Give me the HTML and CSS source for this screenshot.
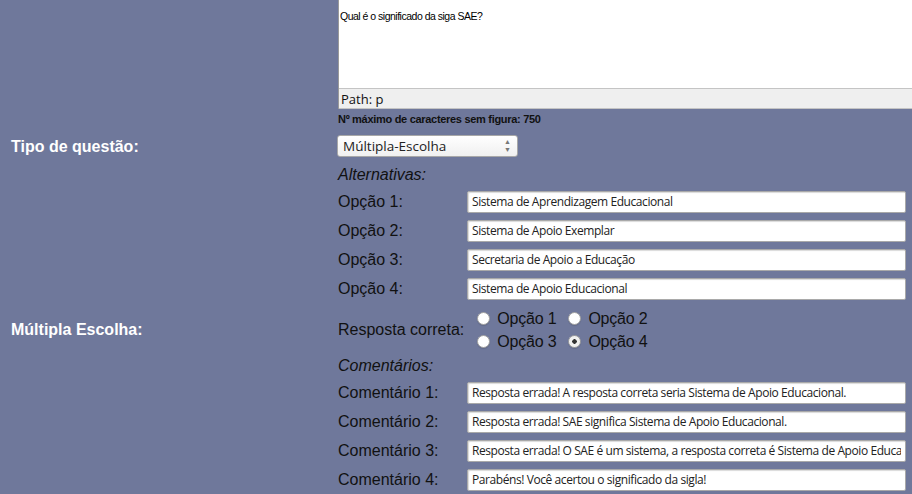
FILE: index.html
```html
<!DOCTYPE html>
<html lang="pt">
<head>
<meta charset="utf-8">
<title>Questão</title>
<link rel="stylesheet" href="styles.css">
</head>
<body>
<div class="form">
  <div class="lbl"></div>
  <div class="cell">
    <div class="editor">
      <div class="editor-body"><p>Qual é o significado da siga SAE?</p></div>
      <div class="editor-path">Path: p</div>
    </div>
  </div>

  <div class="lbl"></div>
  <div class="cell note">Nº máximo de caracteres sem figura: 750</div>

  <div class="lbl">Tipo de questão:</div>
  <div class="cell sel-cell">
    <div class="select">
      <span>Múltipla-Escolha</span>
      <span class="arrows"><span>▲</span><span>▼</span></span>
    </div>
  </div>

  <div class="lbl">Múltipla Escolha:</div>
  <div class="cell block">
    <div class="section">Alternativas:</div>
    <div class="row"><span class="rlabel">Opção 1:</span><input class="field" type="text" value="Sistema de Aprendizagem Educacional"></div>
    <div class="row"><span class="rlabel">Opção 2:</span><input class="field" type="text" value="Sistema de Apoio Exemplar"></div>
    <div class="row"><span class="rlabel">Opção 3:</span><input class="field" type="text" value="Secretaria de Apoio a Educação"></div>
    <div class="row"><span class="rlabel">Opção 4:</span><input class="field" type="text" value="Sistema de Apoio Educacional"></div>

    <div class="answer">
      <span class="alabel">Resposta correta:</span>
      <div class="radios">
        <div class="rline">
          <label class="ropt"><input type="radio" name="r"><span>Opção 1</span></label>
          <label class="ropt"><input type="radio" name="r"><span>Opção 2</span></label>
        </div>
        <div class="rline">
          <label class="ropt"><input type="radio" name="r"><span>Opção 3</span></label>
          <label class="ropt"><input type="radio" name="r" checked><span>Opção 4</span></label>
        </div>
      </div>
    </div>

    <div class="section">Comentários:</div>
    <div class="row"><span class="rlabel">Comentário 1:</span><input class="field" type="text" value="Resposta errada! A resposta correta seria Sistema de Apoio Educacional."></div>
    <div class="row"><span class="rlabel">Comentário 2:</span><input class="field" type="text" value="Resposta errada! SAE significa Sistema de Apoio Educacional."></div>
    <div class="row"><span class="rlabel">Comentário 3:</span><input class="field" type="text" value="Resposta errada! O SAE é um sistema, a resposta correta é Sistema de Apoio Educacional."></div>
    <div class="row"><span class="rlabel">Comentário 4:</span><input class="field" type="text" value="Parabéns! Você acertou o significado da sigla!"></div>
  </div>
</div>
</body>
</html>
```

FILE: styles.css
```css
html, body {
  margin: 0;
  padding: 0;
  overflow: hidden;
}
body {
  background: #6f789b;
  font-family: "Liberation Sans", Arial, sans-serif;
  color: #111;
  width: 912px;
  height: 494px;
}
.form {
  display: grid;
  grid-template-columns: 338px 574px;
  align-items: center;
}
.lbl {
  padding-left: 11px;
  color: #fff;
  font-weight: bold;
  font-size: 16px;
}
.cell {
  min-width: 0;
}
.editor {
  border-left: 1px solid #9a9a9a;
  background: #fff;
  width: 600px;
}
.editor-body {
  height: 88px;
  box-sizing: border-box;
  padding: 10px 0 0 1px;
  font-size: 10.5px;
  letter-spacing: -0.5px;
  font-family: "Liberation Sans", Arial, sans-serif;
  color: #000;
}
.editor-body p {
  margin: 0;
}
.editor-path {
  height: 19px;
  line-height: 20px;
  border-top: 1px solid #c4c4c4;
  border-bottom: 1px solid #c4c4c4;
  background: #efefef;
  padding-left: 2px;
  font-family: "Open Sans", sans-serif;
  font-size: 13px;
  color: #111;
}
.note {
  height: 20px;
  line-height: 20px;
  font-size: 11px;
  letter-spacing: -0.3px;
  font-weight: bold;
  color: #111;
}
.sel-cell {
  padding: 6px 0 8px;
}
.select {
  margin-left: -1px;
  height: 20px;
  border: 1px solid #a8a8a8;
  border-radius: 3px;
  background: linear-gradient(#ffffff, #f0f0f0);
  display: flex;
  align-items: center;
  justify-content: space-between;
  padding: 0 6px 0 5px;
  box-sizing: content-box;
  width: 168px;
  font-family: "Open Sans", sans-serif;
  font-size: 13.5px;
  color: #222;
}
.arrows {
  display: flex;
  flex-direction: column;
  font-size: 7px;
  line-height: 8px;
  color: #777;
}
.block {
  display: flex;
  flex-direction: column;
}
.section {
  height: 20px;
  line-height: 20px;
  font-style: italic;
  font-size: 16px;
  margin-bottom: 2px;
}
.row {
  display: flex;
  align-items: center;
  height: 29px;
}
.rlabel {
  width: 129px;
  font-size: 16px;
  flex: none;
}
.field {
  width: 439px;
  height: 22px;
  box-sizing: border-box;
  margin: 0;
  border: 1px solid #a9a9a9;
  border-radius: 2px;
  box-shadow: inset 1px 1px 1px rgba(0,0,0,0.15);
  padding: 0 4px;
  background: #fff;
  font-family: "Open Sans", sans-serif;
  font-size: 12px;
  letter-spacing: -0.42px;
  color: #222;
  outline: none;
}
.answer {
  display: flex;
  align-items: center;
  padding: 4px 0 3px;
}
.alabel {
  font-size: 16px;
  margin-right: 13px;
}
.radios {
  display: flex;
  flex-direction: column;
}
.rline {
  display: flex;
  height: 23px;
  align-items: center;
}
.ropt {
  display: flex;
  align-items: center;
  font-size: 16px;
  letter-spacing: -0.2px;
  margin-right: 12px;
}
.ropt input {
  appearance: none;
  -webkit-appearance: none;
  width: 13px;
  height: 13px;
  margin: 0 7px 0 0;
  border: 1px solid #a0a0a0;
  border-radius: 50%;
  background: #fff;
  box-sizing: border-box;
  box-shadow: 0 1px 1px rgba(0,0,0,0.12);
}
.ropt input:checked {
  background: radial-gradient(circle, #333 0 2px, #f0f0f0 2.5px);
}
```
